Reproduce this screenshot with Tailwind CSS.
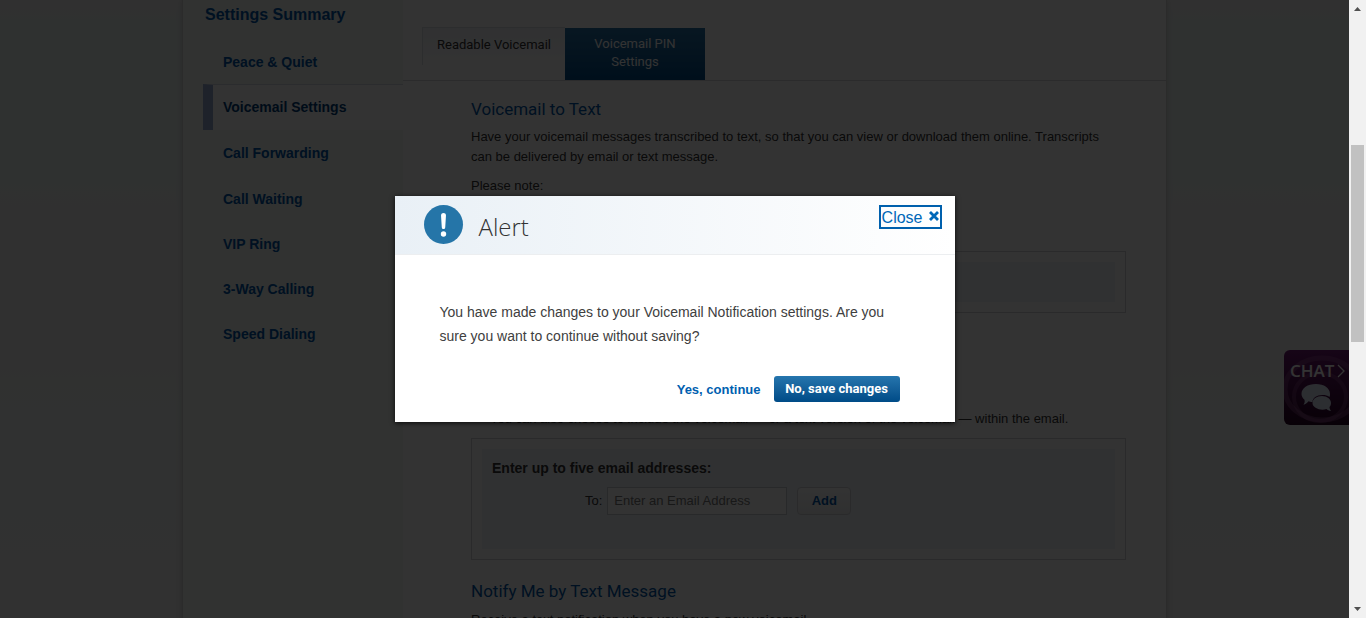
<!DOCTYPE html>
<html lang="en">
<head>
<meta charset="utf-8">
<title>Voicemail Settings</title>
<script src="https://cdn.jsdelivr.net/npm/@tailwindcss/browser@4"></script>
</head>
<body class="flex h-screen overflow-hidden bg-[#f0f0f0] font-['Liberation_Sans',Arial,sans-serif] text-[13px] leading-5 text-[#333]">
<div class="relative h-full min-w-0 flex-1 overflow-hidden bg-[linear-gradient(#f0f0f0_0,#ebf3f0_4%,#ebf3f0_28%,#f0f0f0_36%,#f0f0f0_58%,#eef5f2_66%,#f0f3f2_76%,#f2f2f2_90%)]">

  <div class="mx-auto flex min-h-full max-w-[985px] border-x border-[#d8d8d8] bg-white shadow-[0_0_6px_rgba(0,0,0,0.15)]">
    <nav aria-label="Settings" class="w-[220px] shrink-0 bg-[#f2f8f5] pl-5 font-bold text-[#0057a8]">
      <h2 class="pt-[5px] pl-0.5 text-base leading-5">Settings Summary</h2>
      <ul class="pt-[15px] text-sm">
        <li><a href="#" class="flex h-[44px] items-center pl-5">Peace &amp; Quiet</a></li>
        <li><a href="#" aria-current="page" class="flex h-[46px] items-center border-t border-l-10 border-t-[#d5dae6] border-l-[#96abd2] bg-white pb-0.5 pl-2.5 text-[#003d7a]">Voicemail Settings</a></li>
        <li><a href="#" class="flex h-[46px] items-center pl-5">Call Forwarding</a></li>
        <li><a href="#" class="flex h-[45px] items-center pl-5">Call Waiting</a></li>
        <li><a href="#" class="flex h-[45px] items-center pl-5">VIP Ring</a></li>
        <li><a href="#" class="flex h-[45px] items-center pl-5">3-Way Calling</a></li>
        <li><a href="#" class="flex h-[45px] items-center pl-5">Speed Dialing</a></li>
      </ul>
    </nav>

    <main class="min-w-0 flex-1">
      <div class="flex items-start border-b border-[#d5d8dc] pt-[27px] pl-[19px] font-[Roboto,sans-serif] leading-[18px]">
        <button class="h-[38px] w-[143px] border-t border-l border-[#dde0e6] bg-linear-to-b from-[#f1f3f8] to-white pb-1 text-[13px]">Readable Voicemail</button>
        <button class="mt-px h-[52px] w-[140px] bg-linear-to-b from-[#2672a6] to-[#004b87] px-6 pb-0.5 text-[13px] text-white">Voicemail PIN Settings</button>
      </div>

      <div class="pr-10 pl-[68px]">
        <h3 class="pt-4 font-[Roboto,sans-serif] text-[17px] leading-6 text-[#0057a8]">Voicemail to Text</h3>
        <p class="pt-1.5 pr-5">Have your voicemail messages transcribed to text, so that you can view or download them online. Transcripts can be delivered by email or text message.</p>
        <p class="pt-[9px]">Please note:</p>
        <div class="mt-[55px] h-[62px] border border-[#d0d3d6] p-2.5">
          <div class="h-full bg-[#f0f3fa]"></div>
        </div>
        <p class="mt-24 pl-[19px]">You can also choose to include the voicemail — or a text version of the voicemail — within the email.</p>
        <section class="mt-[9px] h-[122px] border border-[#d0d3d6] p-2.5">
          <div class="h-full bg-[#f0f3fa] px-2.5 pt-[9px]">
            <h4 class="text-sm leading-5 font-bold">Enter up to five email addresses:</h4>
            <div class="flex items-center pt-[9px] pl-[93px]">
              <label for="email">To:</label>
              <input id="email" type="email" placeholder="Enter an Email Address" class="ml-[5px] h-[28px] w-[180px] border border-[#c8ccd2] bg-white px-1.5 pb-0.5 placeholder:text-[#777]">
              <button class="ml-2.5 h-[28px] w-[54px] rounded border border-[#d0d3d8] bg-linear-to-b from-white to-[#eceef0] font-bold text-[#0057a8]">Add</button>
            </div>
          </div>
        </section>
        <h3 class="pt-[19px] font-[Roboto,sans-serif] text-[17px] leading-6 text-[#0057a8]">Notify Me by Text Message</h3>
        <p class="pt-[7px]">Receive a text notification when you have a new voicemail.</p>
      </div>
    </main>
  </div>

  <button aria-label="Chat" class="absolute top-[350px] right-0 h-[75px] w-[65px] overflow-hidden rounded-l-md bg-linear-to-b from-[#701a74] to-[#2a0526]">
    <svg class="h-full w-full" viewBox="0 0 65 75" fill="none">
      <ellipse cx="38" cy="39" rx="37" ry="31" stroke="#a4609f" stroke-opacity=".35" stroke-width="5"/>
      <ellipse cx="36" cy="47" rx="26" ry="24" stroke="#a4609f" stroke-opacity=".3" stroke-width="4"/>
      <path d="m54 15 6 6-6 6" stroke="#fff" stroke-width="1.3"/>
      <path d="M32 34c8 0 14 4 14 10 0 1 0 2-.5 3-2-1.500-4-2-7-2-6 0-10 3-10 7-2 0-3-.3-4-.8-1.500 2-3 3-5 3.500 1-1.500 1.500-3 1-5-2-1.500-3-3.500-3-5.700 0-6 6-10 14.500-10Z" fill="#dce4f5"/>
      <path d="M38 46c5 0 9 3 9 7 0 2-.7 3-1.500 4 0 1.500.5 2.500 1.500 4-2-.3-3.500-1-4.500-2-6 2-14-1-14-6 0-4 4-7 9.500-7Z" fill="#dce4f5"/>
      <text x="6" y="27" fill="#fff" font-family="Open Sans, sans-serif" font-size="17" font-weight="600">CHAT</text>
    </svg>
  </button>

  <div class="absolute inset-0 flex items-center justify-center bg-black/80">
    <div role="dialog" aria-modal="true" aria-labelledby="alert-title" class="w-[560px] bg-white shadow-[0_1px_5px_rgba(0,0,0,0.8)]">
      <header class="flex items-start justify-between border-b border-[#eceef0] bg-linear-to-r from-[#e9f0f6] to-white py-[9px] pr-[13px] pl-[29px]">
        <div class="flex items-start gap-[15px]">
          <svg class="h-10 w-10" viewBox="0 0 40 40" aria-hidden="true">
            <circle cx="19.500" cy="19.500" r="19.500" fill="#2575a8"/>
            <path d="M17 10.500c0-3.300 5-3.300 5 0l-.8 12c-.2 2-3.200 2-3.400 0Z" fill="#fff"/>
            <circle cx="19.500" cy="29" r="2.700" fill="#fff"/>
          </svg>
          <h1 id="alert-title" class="pt-1.5 font-['Open_Sans',sans-serif] text-[24px] leading-8 font-light">Alert</h1>
        </div>
        <button class="flex h-6 items-center gap-1.5 border-2 border-[#0060ad] px-px pt-0.5 text-base leading-5 text-[#0067b8]">Close
          <svg class="mb-1 h-3 w-2.5" viewBox="0 0 10 12" stroke="#0067b8" stroke-width="2.800" aria-hidden="true"><path d="m1 2 8 8M9 2 1 10"/></svg>
        </button>
      </header>
      <p class="pt-[45px] pr-[55px] pl-[45px] text-sm leading-6 text-[#404040]">You have made changes to your Voicemail Notification settings. Are you sure you want to continue without saving?</p>
      <div class="flex items-center justify-end gap-[13px] pt-7 pr-[55px] pb-5">
        <a href="#" class="pt-0.5 font-bold text-[#0060b0]">Yes, continue</a>
        <button class="h-[26px] w-[126px] rounded-[3px] bg-linear-to-b from-[#2575ad] to-[#004b87] font-[Roboto,sans-serif] text-[13px] font-bold text-white">No, save changes</button>
      </div>
    </div>
  </div>
</div>

<div aria-hidden="true" class="flex h-full w-[17px] shrink-0 flex-col items-center bg-[#f1f1f1] py-[7px]">
  <svg class="h-1 w-[7px]" viewBox="0 0 7 4" fill="#505050"><path d="M3.500 0 7 4H0Z"/></svg>
  <div class="mt-[134px] h-[197px] w-[13px] bg-[#c1c1c1]"></div>
  <svg class="mt-auto h-1 w-[7px]" viewBox="0 0 7 4" fill="#505050"><path d="M0 0h7L3.500 4Z"/></svg>
</div>
</body>
</html>
